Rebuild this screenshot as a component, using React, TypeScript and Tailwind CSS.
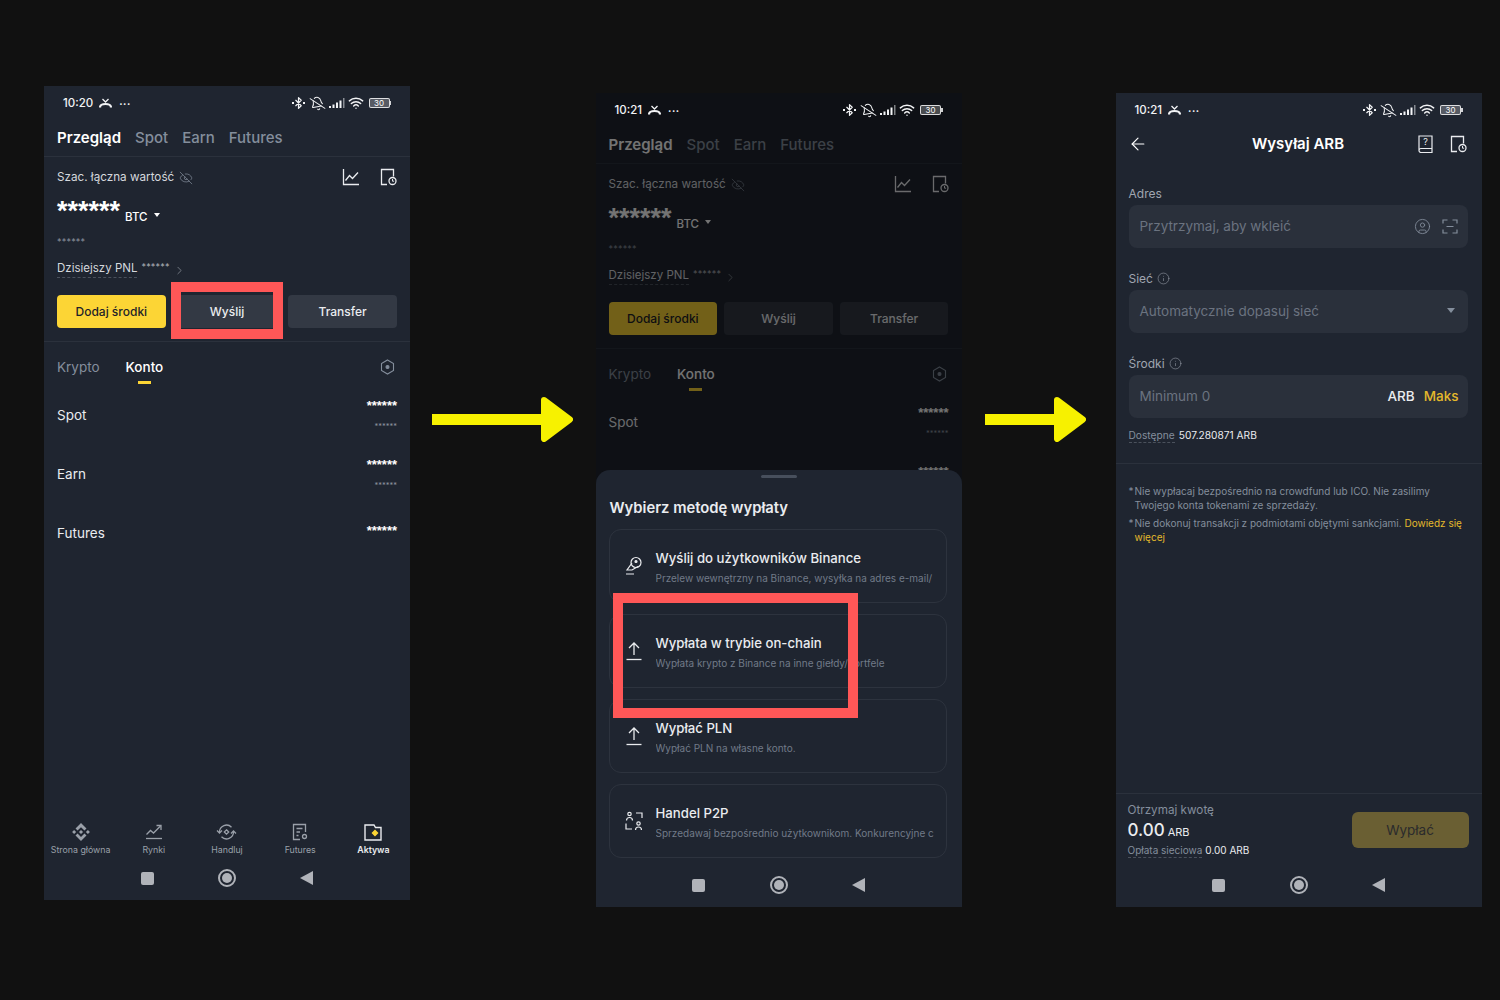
import React from "react";
import { Bluetooth, BellOff, Wifi, EyeOff, ArrowLeft, CircleUser, Info, ChevronRight } from "lucide-react";

function MissedCall() {
    return (
        <svg width="13" height="11" viewBox="0 0 13 11" fill="none" stroke="currentColor" strokeWidth="1.3">
            <path d="M1 9.500c0-2.200 2.400-3.500 5.500-3.500s5.500 1.300 5.500 3.500" strokeWidth="2.200" />
            <path d="M3.500 1l3 3 3-3" />
        </svg>
    );
}

function StatusBar({ time }: { time: string }) {
    return (
        <div className="relative z-10 flex h-[34px] shrink-0 items-center justify-between pl-[19px] pr-[19px] text-[#f2f3f5]">
            <div className="flex items-center gap-[6px]">
                <span className="pt-[1px] text-[11.500px] font-medium">{time}</span>
                <MissedCall />
                <span className="ml-[1px] pb-[4px] text-[10px] font-bold leading-none tracking-[0.5px]">...</span>
            </div>
            <div className="flex items-center gap-[3px]">
                <div className="relative flex w-[13px] justify-center">
                    <Bluetooth size={14} strokeWidth={2.2} />
                    <div className="absolute left-0 top-[6px] h-[2px] w-[2px] bg-current" />
                    <div className="absolute right-0 top-[6px] h-[2px] w-[2px] bg-current" />
                </div>
                <BellOff size={15} strokeWidth={1.6} className="ml-[2px] -rotate-[12deg]" />
                <svg width="16" height="10" viewBox="0 0 16 10" fill="currentColor" className="ml-[1px]">
                    <rect x="0" y="8" width="2" height="2" />
                    <rect x="3.500" y="6.500" width="2" height="3.500" />
                    <rect x="7" y="4.500" width="2" height="5.500" />
                    <rect x="10.500" y="2.500" width="2" height="7.500" />
                    <rect x="14" y="0" width="1.500" height="10" opacity="0.5" />
                </svg>
                <Wifi size={16} strokeWidth={2.2} />
                <div className="ml-[2px] flex items-center">
                    <div className="flex h-[10px] w-[21px] items-center justify-center rounded-[2px] border border-white/80 bg-white/25 text-[8px] leading-none text-white">
                        30
                    </div>
                    <div className="h-[4px] w-[1.500px] bg-white/80" />
                </div>
            </div>
        </div>
    );
}

function NavButtons() {
    return (
        <div className="flex h-[44px] shrink-0 items-center justify-center text-[#b0b3b9]">
            <div className="flex w-[80px] justify-center">
                <div className="h-[13px] w-[13px] rounded-[2px] bg-current" />
            </div>
            <div className="flex w-[80px] justify-center">
                <div className="flex h-[18px] w-[18px] items-center justify-center rounded-full border-2 border-current">
                    <div className="h-[10px] w-[10px] rounded-full bg-current" />
                </div>
            </div>
            <div className="flex w-[80px] justify-center">
                <div className="-ml-[1px] h-0 w-0 border-y-[7px] border-r-[13px] border-y-transparent border-r-current" />
            </div>
        </div>
    );
}

function ChartIcon() {
    return (
        <svg width="18" height="18" viewBox="0 0 18 18" fill="none" stroke="currentColor" strokeWidth="1.300">
            <path d="M1.500 1v15.500H17" />
            <path d="M3.500 12.500l4-5 3 3 5.500-6" />
        </svg>
    );
}

function HistoryIcon() {
    return (
        <svg width="17" height="18" viewBox="0 0 17 18" fill="none" stroke="currentColor" strokeWidth="1.300">
            <path d="M7 16.500H1.500V1.500h12v7" />
            <circle cx="12.500" cy="13" r="3.500" />
            <path d="M12.500 11v2.200h1.600" strokeWidth="1" />
        </svg>
    );
}

function Overview() {
    return (
        <div>
            <div className="flex h-[37px] items-center gap-[14px] border-b border-[#2b313c] px-[13px] text-[15px] font-medium text-[#848e9c]">
                <span className="font-semibold text-white">Przegląd</span>
                <span>Spot</span>
                <span>Earn</span>
                <span>Futures</span>
            </div>
            <div className="px-[13px]">
                <div className="flex h-[40px] items-center justify-between text-[#d5d8dd]">
                    <div className="flex items-center gap-[5px] pt-[2px] text-[11.700px]">
                        Szac. łączna wartość
                        <EyeOff size={14} strokeWidth={1.2} className="text-[#848e9c]" />
                    </div>
                    <div className="flex items-center gap-[20px] text-[#eaecef]">
                        <ChartIcon />
                        <HistoryIcon />
                    </div>
                </div>
                <div className="flex h-[28px] items-start text-white">
                    <span className="font-['Liberation_Sans',sans-serif] text-[27px] font-bold leading-[28px]">******</span>
                    <span className="ml-[5px] mt-[13px] text-[11.500px] font-medium leading-[14px]">BTC</span>
                    <div className="ml-[6px] mt-[16px] h-0 w-0 border-x-[3.500px] border-t-[4px] border-x-transparent border-t-white" />
                </div>
                <div className="flex h-[24px] items-center pt-[10px] text-[9px] tracking-[0.2px] text-[#8b929e]">******</div>
                <div className="mt-[4px] flex h-[32px] items-center text-[#d5d8dd]">
                    <span className="border-b border-dashed border-[#4a515c] text-[11.500px] leading-[17px]">Dzisiejszy PNL</span>
                    <span className="ml-[4px] pb-[4px] text-[9px] tracking-[0.2px] text-[#b0b3b9]">******</span>
                    <ChevronRight size={13} strokeWidth={1.2} className="ml-[3px] mt-[2px] text-[#9aa0a9]" />
                </div>
                <div className="mt-[10px] grid h-[33px] grid-cols-3 gap-[7px] text-[12px] font-medium">
                    <div className="flex items-center justify-center rounded-[4px] bg-[#fcd535] text-[#1e2329]">Dodaj środki</div>
                    <div className="flex items-center justify-center rounded-[4px] bg-[#333944] text-[#eaecef]">Wyślij</div>
                    <div className="flex items-center justify-center rounded-[4px] bg-[#333944] text-[#eaecef]">Transfer</div>
                </div>
            </div>
            <div className="mt-[13px] border-t border-[#2b313c]" />
            <div className="flex h-[44px] items-start justify-between pl-[13px] pr-[15px] pt-[15px] text-[13.500px] leading-[20px]">
                <div className="flex items-center gap-[26px]">
                    <span className="text-[#848e9c]">Krypto</span>
                    <div className="relative font-medium text-white">
                        Konto
                        <div className="absolute -bottom-[7px] left-[12px] h-[3px] w-[13px] bg-[#fcd535]" />
                    </div>
                </div>
                <svg width="15" height="16" viewBox="0 0 15 16" fill="none" stroke="#848e9c" strokeWidth="1.100" className="mt-[2px]">
                    <path d="M7.500 1l6 3.500v7l-6 3.500-6-3.500v-7z" />
                    <circle cx="7.500" cy="8" r="1.500" fill="#848e9c" />
                </svg>
            </div>
            <BalanceRow name="Spot" second />
            <BalanceRow name="Earn" second />
            <BalanceRow name="Futures" />
        </div>
    );
}

function BalanceRow({ name, second }: { name: string; second?: boolean }) {
    return (
        <div className="flex h-[59px] items-center justify-between px-[13px] text-[13.500px] text-[#eaecef]">
            <span>{name}</span>
            <div className={`flex flex-col items-end ${second ? "" : "mb-[6px]"}`}>
                <span className="font-['Liberation_Sans',sans-serif] text-[13px] font-bold leading-[12px] text-white">******</span>
                {second && <span className="mt-[10px] text-[7.500px] leading-[10px] text-[#8b929e]">******</span>}
            </div>
        </div>
    );
}

function BottomTabs() {
    const color = "#9aa0a9";
    return (
        <div className="mt-auto grid h-[33px] grid-cols-5 text-[8.800px] text-[#9aa0a9]">
            <TabItem label="Strona główna">
                <svg width="18" height="18" viewBox="0 0 24 24" fill={color}>
                    <path d="M7.370 10.100 12 5.500l4.630 4.630 2.690-2.690L12 .12 4.680 7.440zM.12 12l2.690-2.690L5.500 12l-2.690 2.690zM7.370 13.900 12 18.500l4.630-4.630 2.690 2.690L12 23.880l-7.320-7.320zM18.500 12l2.690-2.690L23.880 12l-2.690 2.690zM14.730 12 12 9.270 9.270 12 12 14.730z" />
                </svg>
            </TabItem>
            <TabItem label="Rynki">
                <svg width="18" height="18" viewBox="0 0 18 18" fill="none" stroke={color} strokeWidth="1.300">
                    <path d="M1 15.500h16" />
                    <path d="M1.500 11.500l4-4 3 2.500 7-7" />
                    <path d="M11.500 2.500h4.500V7" />
                </svg>
            </TabItem>
            <TabItem label="Handluj">
                <svg width="21" height="18" viewBox="0 0 21 18" fill="none" stroke={color} strokeWidth="1.300">
                    <path d="M3.500 9a7 7 0 0 1 12-4.800" />
                    <path d="M17.500 9a7 7 0 0 1-12 4.800" />
                    <path d="M1 7.500l2.500 2.500 2.500-2.500M15 10.500l2.500-2.500 2.500 2.500" />
                    <path d="M10.500 6.800l2.200 2.200-2.200 2.200L8.300 9z" />
                </svg>
            </TabItem>
            <TabItem label="Futures">
                <svg width="17" height="18" viewBox="0 0 17 18" fill="none" stroke={color} strokeWidth="1.300">
                    <path d="M8 16.500H1.500v-15h12V9" />
                    <path d="M4.500 5.500h6M4.500 9h3.500M4.500 12.500h2" />
                    <circle cx="12.500" cy="13.500" r="2" />
                </svg>
            </TabItem>
            <TabItem label="Aktywa" active>
                <svg width="18" height="18" viewBox="0 0 18 18" fill="none" stroke="#eaecef" strokeWidth="1.400">
                    <path d="M1 4V2h9l1.500 2.500H17v12.500H1z" />
                    <path d="M11 7.500l2.500 2.500-2.500 2.500L8.500 10z" fill="#fcd535" stroke="#fcd535" />
                </svg>
            </TabItem>
        </div>
    );
}

function TabItem({ label, active, children }: { label: string; active?: boolean; children: React.ReactNode }) {
    return (
        <div className={`flex flex-col items-center gap-[4px] whitespace-nowrap ${active ? "font-semibold text-[#eaecef]" : ""}`}>
            <div className="flex h-[18px] items-center">{children}</div>
            <span className="leading-[10px]">{label}</span>
        </div>
    );
}

function MethodCard({ title, text, icon }: { title: string; text: string; icon: React.ReactNode }) {
    return (
        <div className="flex h-[74px] items-center rounded-[12px] border border-[#2d333e] pl-[15px] pr-[12px]">
            <div className="flex w-[31px] shrink-0 text-[#eaecef]">{icon}</div>
            <div className="min-w-0 flex-1 pt-[1px]">
                <div className="text-[13.200px] font-medium leading-[20px] text-[#eaecef]">{title}</div>
                <div className="mt-[2px] overflow-hidden whitespace-nowrap text-[10px] leading-[16px] text-[#717a88]">{text}</div>
            </div>
        </div>
    );
}

function UploadIcon() {
    return (
        <svg width="18" height="20" viewBox="0 0 18 20" fill="none" stroke="currentColor" strokeWidth="1.300">
            <path d="M9 14V2M4 7l5-5 5 5" />
            <path d="M1.500 18.500h15" />
        </svg>
    );
}

function Sheet() {
    return (
        <div className="absolute inset-x-0 bottom-0 flex h-[437px] flex-col rounded-t-[14px] bg-[#1f2530]">
            <div className="mx-auto mt-[5px] h-[3px] w-[36px] rounded-full bg-[#474f5c]" />
            <div className="mt-[18px] pl-[14px] text-[14.800px] font-semibold leading-[24px] text-[#eaecef]">Wybierz metodę wypłaty</div>
            <div className="mt-[9px] flex flex-col gap-[11px] pl-[13px] pr-[15px]">
                <MethodCard
                    title="Wyślij do użytkowników Binance"
                    text="Przelew wewnętrzny na Binance, wysyłka na adres e-mail/"
                    icon={
                        <svg width="18" height="20" viewBox="0 0 18 20" fill="none" stroke="currentColor" strokeWidth="1.200">
                            <circle cx="11" cy="6.500" r="5" />
                            <circle cx="11" cy="5.500" r="1" fill="currentColor" />
                            <path d="M7 7L2 14h5l6-3.500M1 18h8" />
                        </svg>
                    }
                />
                <MethodCard title="Wypłata w trybie on-chain" text="Wypłata krypto z Binance na inne giełdy/portfele" icon={<UploadIcon />} />
                <MethodCard title="Wypłać PLN" text="Wypłać PLN na własne konto." icon={<UploadIcon />} />
                <MethodCard
                    title="Handel P2P"
                    text="Sprzedawaj bezpośrednio użytkownikom. Konkurencyjne c"
                    icon={
                        <svg width="18" height="20" viewBox="0 0 18 20" fill="none" stroke="currentColor" strokeWidth="1.200">
                            <circle cx="4.500" cy="3" r="1.700" />
                            <path d="M1.500 9.500c0-4 6-4 6 0" />
                            <circle cx="13.500" cy="12.500" r="1.700" />
                            <path d="M10.500 19c0-4 6-4 6 0" />
                            <path d="M11 2h6v5M1 12.500V18h6" />
                        </svg>
                    }
                />
            </div>
            <div className="mt-auto">
                <NavButtons />
            </div>
        </div>
    );
}

function Label({ text, info }: { text: string; info?: boolean }) {
    return (
        <div className="flex h-[24px] items-center gap-[4px] pt-[1px] text-[12px] text-[#a0a6b0]">
            {text}
            {info && <Info size={13} strokeWidth={1} />}
        </div>
    );
}

function SendForm() {
    return (
        <div className="flex h-full flex-col">
            <div className="flex h-[34px] shrink-0 items-center justify-between pl-[13px] pr-[14px] text-white">
                <div className="-ml-[1px] w-[51px]">
                    <ArrowLeft size={20} strokeWidth={1.4} />
                </div>
                <span className="text-[15px] font-semibold">Wysyłaj ARB</span>
                <div className="flex w-[50px] items-center justify-end gap-[17px] text-[#eaecef]">
                    <svg width="15" height="18" viewBox="0 0 15 18" fill="none" stroke="currentColor" strokeWidth="1.200" className="shrink-0">
                        <path d="M1 15.500V1h13v16.500H3a2 2 0 0 1-2-2zM1 15a2 2 0 0 1 2-1.500h11" />
                        <text x="7.500" y="10" textAnchor="middle" fontSize="9" fill="currentColor" stroke="none">?</text>
                    </svg>
                    <div className="shrink-0">
                        <HistoryIcon />
                    </div>
                </div>
            </div>
            <div className="mt-[20px] pl-[13px] pr-[14px]">
                <Label text="Adres" />
                <div className="flex h-[43px] items-center justify-between rounded-[8px] bg-[#2a303b] pl-[11px] pr-[10px] text-[13.500px] text-[#6b7380]">
                    Przytrzymaj, aby wkleić
                    <div className="flex items-center gap-[11px] text-[#848e9c]">
                        <CircleUser size={17} strokeWidth={1.2} />
                        <svg width="16" height="15" viewBox="0 0 16 15" fill="none" stroke="currentColor" strokeWidth="1.200">
                            <path d="M1 4.500V1h4.500M10.500 1H15v3.500M1 10.500V14h4.500M10.500 14H15v-3.500M4.500 7.500h7" />
                        </svg>
                    </div>
                </div>
                <div className="mt-[18px]"><Label text="Sieć" info /></div>
                <div className="flex h-[43px] items-center justify-between rounded-[8px] bg-[#2a303b] pl-[11px] pr-[13px] text-[13.500px] text-[#6b7380]">
                    Automatycznie dopasuj sieć
                    <div className="mb-[2px] h-0 w-0 border-x-[4.500px] border-t-[5px] border-x-transparent border-t-[#848e9c]" />
                </div>
                <div className="mt-[18px]"><Label text="Środki" info /></div>
                <div className="flex h-[43px] items-center justify-between rounded-[8px] bg-[#2a303b] pl-[11px] pr-[9px] text-[13.500px] text-[#6b7380]">
                    Minimum 0
                    <div className="flex gap-[9px] font-medium">
                        <span className="text-[#eaecef]">ARB</span>
                        <span className="text-[#e4b92c]">Maks</span>
                    </div>
                </div>
                <div className="mt-[10px] flex text-[10.200px] leading-[14px]">
                    <span className="border-b border-dashed border-[#4a515c] text-[#848e9c]">Dostępne</span>
                    <span className="ml-[4px] text-[#eaecef]">507.280871 ARB</span>
                </div>
            </div>
            <div className="mt-[20px] border-t border-[#2b313c]" />
            <div className="mt-[20px] flex flex-col gap-[4px] px-[13px] text-[10px] leading-[14px] text-[#848e9c]">
                <div className="flex">
                    <span className="w-[6px] shrink-0">*</span>
                    <span>
                        Nie wypłacaj bezpośrednio na crowdfund lub ICO. Nie zasilimy
                        <br />
                        Twojego konta tokenami ze sprzedaży.
                    </span>
                </div>
                <div className="flex">
                    <span className="w-[6px] shrink-0">*</span>
                    <span>
                        Nie dokonuj transakcji z podmiotami objętymi sankcjami. <span className="text-[#e4b92c]">Dowiedz się<br />więcej</span>
                    </span>
                </div>
            </div>
            <div className="mt-auto border-t border-[#2b313c]">
                <div className="flex h-[69px] items-start justify-between pl-[12px] pr-[13px] pt-[8px]">
                    <div>
                        <div className="text-[11.700px] leading-[17px] text-[#848e9c]">Otrzymaj kwotę</div>
                        <div className="flex items-baseline gap-[3px] leading-[22px] text-[#eaecef]">
                            <span className="text-[17px] font-medium">0.00</span>
                            <span className="text-[11px]">ARB</span>
                        </div>
                        <div className="flex text-[10px] leading-[14px]">
                            <span className="border-b border-dashed border-[#4a515c] text-[#848e9c]">Opłata sieciowa</span>
                            <span className="ml-[3px] text-[#eaecef]">0.00 ARB</span>
                        </div>
                    </div>
                    <div className="mt-[10px] flex h-[36px] w-[117px] items-center justify-center rounded-[6px] bg-[#6a5f33] text-[13.500px] text-[#2a2b2c]">
                        Wypłać
                    </div>
                </div>
                <NavButtons />
            </div>
        </div>
    );
}

function Arrow({ width }: { width: number }) {
    return (
        <svg width={width} height="45" viewBox={`0 0 ${width} 45`} fill="#f7f100">
            <rect x="0" y="17" width={width - 20} height="11" />
            <path d={`M${width - 29} 3L${width - 3} 22.500 ${width - 29} 42z`} stroke="#f7f100" strokeWidth="6" strokeLinejoin="round" />
        </svg>
    );
}

export default function App() {
    return (
        <div className="flex h-[1000px] w-[1500px] items-start bg-[#111111] pl-[44px] font-['Inter','Noto_Sans',sans-serif]">
            <div className="relative mt-[86px] flex h-[814px] w-[366px] shrink-0 flex-col bg-[#1f2530]">
                <StatusBar time="10:20" />
                <Overview />
                <BottomTabs />
                <NavButtons />
                <div className="absolute left-[127px] top-[196px] h-[57px] w-[112px] border-[10px] border-[#ff5757]" />
            </div>
            <div className="ml-[22px] mt-[397px] flex w-[163.500px] shrink-0">
                <Arrow width={141} />
            </div>
            <div className="relative mt-[93px] flex h-[814px] w-[366px] shrink-0 flex-col overflow-hidden bg-[#1f2530]">
                <StatusBar time="10:21" />
                <Overview />
                <div className="absolute inset-0 bg-black/55" />
                <Sheet />
                <div className="absolute left-[17.500px] top-[500px] h-[125px] w-[245px] border-[10px] border-[#ff5757]" />
            </div>
            <div className="ml-[23px] mt-[397px] flex w-[131px] shrink-0">
                <Arrow width={101} />
            </div>
            <div className="mt-[93px] flex h-[814px] w-[366px] shrink-0 flex-col bg-[#1f2530]">
                <StatusBar time="10:21" />
                <div className="min-h-0 flex-1">
                    <SendForm />
                </div>
            </div>
        </div>
    );
}
